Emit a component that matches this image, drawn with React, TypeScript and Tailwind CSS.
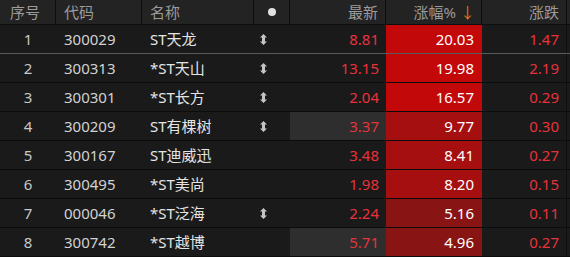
import React from 'react';

type Row = {
  no: number;
  code: string;
  name: string;
  flag: boolean;
  price: string;
  pct: string;
  chg: string;
  hl: boolean;
  tone: 'hi' | 'mid' | 'lo';
};

const rows: Row[] = [
  { no: 1, code: '300029', name: 'ST天龙', flag: true, price: '8.81', pct: '20.03', chg: '1.47', hl: false, tone: 'hi' },
  { no: 2, code: '300313', name: '*ST天山', flag: true, price: '13.15', pct: '19.98', chg: '2.19', hl: false, tone: 'hi' },
  { no: 3, code: '300301', name: '*ST长方', flag: true, price: '2.04', pct: '16.57', chg: '0.29', hl: false, tone: 'hi' },
  { no: 4, code: '300209', name: 'ST有棵树', flag: true, price: '3.37', pct: '9.77', chg: '0.30', hl: true, tone: 'mid' },
  { no: 5, code: '300167', name: 'ST迪威迅', flag: false, price: '3.48', pct: '8.41', chg: '0.27', hl: false, tone: 'mid' },
  { no: 6, code: '300495', name: '*ST美尚', flag: false, price: '1.98', pct: '8.20', chg: '0.15', hl: false, tone: 'mid' },
  { no: 7, code: '000046', name: '*ST泛海', flag: true, price: '2.24', pct: '5.16', chg: '0.11', hl: false, tone: 'lo' },
  { no: 8, code: '300742', name: '*ST越博', flag: false, price: '5.71', pct: '4.96', chg: '0.27', hl: true, tone: 'lo' },
];

const toneBg = {
  hi: 'bg-[#c20808]',
  mid: 'bg-[#a60f0f]',
  lo: 'bg-[#881414]',
};

function UpDown() {
  return (
    <svg width="7" height="11" viewBox="0 0 7 11" className="text-[#c4c4c4]">
      <path d="M3.5 0 L7 3.5 L5 3.5 L5 7.5 L7 7.5 L3.5 11 L0 7.5 L2 7.5 L2 3.5 L0 3.5 Z" fill="currentColor" />
    </svg>
  );
}

export default function App() {
  return (
    <div
      className="w-[570px] h-[257px] overflow-hidden bg-[#1a1a1a] text-[15px]"
      style={{ fontFamily: '"Noto Sans", "Noto Sans CJK SC", sans-serif' }}
    >
      {/* header */}
      <div className="flex h-[25px] bg-[#232323] border-b border-[#0e0e0e] text-[#9b9b9b]">
        <div className="w-[56px] border-r border-[#0e0e0e] pl-[10px] flex items-center">序号</div>
        <div className="w-[86px] border-r border-[#0e0e0e] pl-[8px] flex items-center">代码</div>
        <div className="w-[112px] border-r border-[#0e0e0e] pl-[8px] flex items-center">名称</div>
        <div className="w-[36px] border-r border-[#0e0e0e] flex items-center justify-center">
          <span className="w-[8px] h-[8px] rounded-full bg-[#e0e0e0] ml-[1px]" />
        </div>
        <div className="w-[96px] border-r border-[#0e0e0e] pr-[7px] flex items-center justify-end">最新</div>
        <div className="w-[96px] border-r border-[#0e0e0e] pr-[6px] flex items-center justify-end gap-[4px]">
          <span>涨幅%</span>
          <span className="text-[#e8731c] text-[15px] leading-none">↓</span>
        </div>
        <div className="w-[85px] border-r border-[#0e0e0e] pr-[7px] flex items-center justify-end">涨跌</div>
        <div className="flex-1" />
      </div>

      {rows.map((r, i) => (
        <div
          key={r.no}
          className={`flex h-[29px] border-b ${i === 0 ? 'border-[#5a5a5a]' : 'border-[#0c0c0c]'}`}
        >
          <div className="w-[56px] flex items-center justify-center text-[#c8c8c8]">{r.no}</div>
          <div className="w-[86px] pl-[8px] flex items-center text-[#d2d2d2]">{r.code}</div>
          <div className="w-[112px] pl-[8px] flex items-center text-[#e4e4e4]">{r.name}</div>
          <div className="w-[36px] flex items-center pl-[6px]">{r.flag && <UpDown />}</div>
          <div
            className={`w-[96px] pr-[7px] flex items-center justify-end text-[#e8323a] ${r.hl ? 'bg-[#2e2e2e]' : ''}`}
          >
            {r.price}
          </div>
          <div className={`w-[96px] pr-[8px] flex items-center justify-end text-white ${toneBg[r.tone]}`}>
            {r.pct}
          </div>
          <div className="w-[85px] pr-[7px] flex items-center justify-end text-[#e8323a] border-r border-[#0e0e0e]">
            {r.chg}
          </div>
          <div className="flex-1" />
        </div>
      ))}
    </div>
  );
}
